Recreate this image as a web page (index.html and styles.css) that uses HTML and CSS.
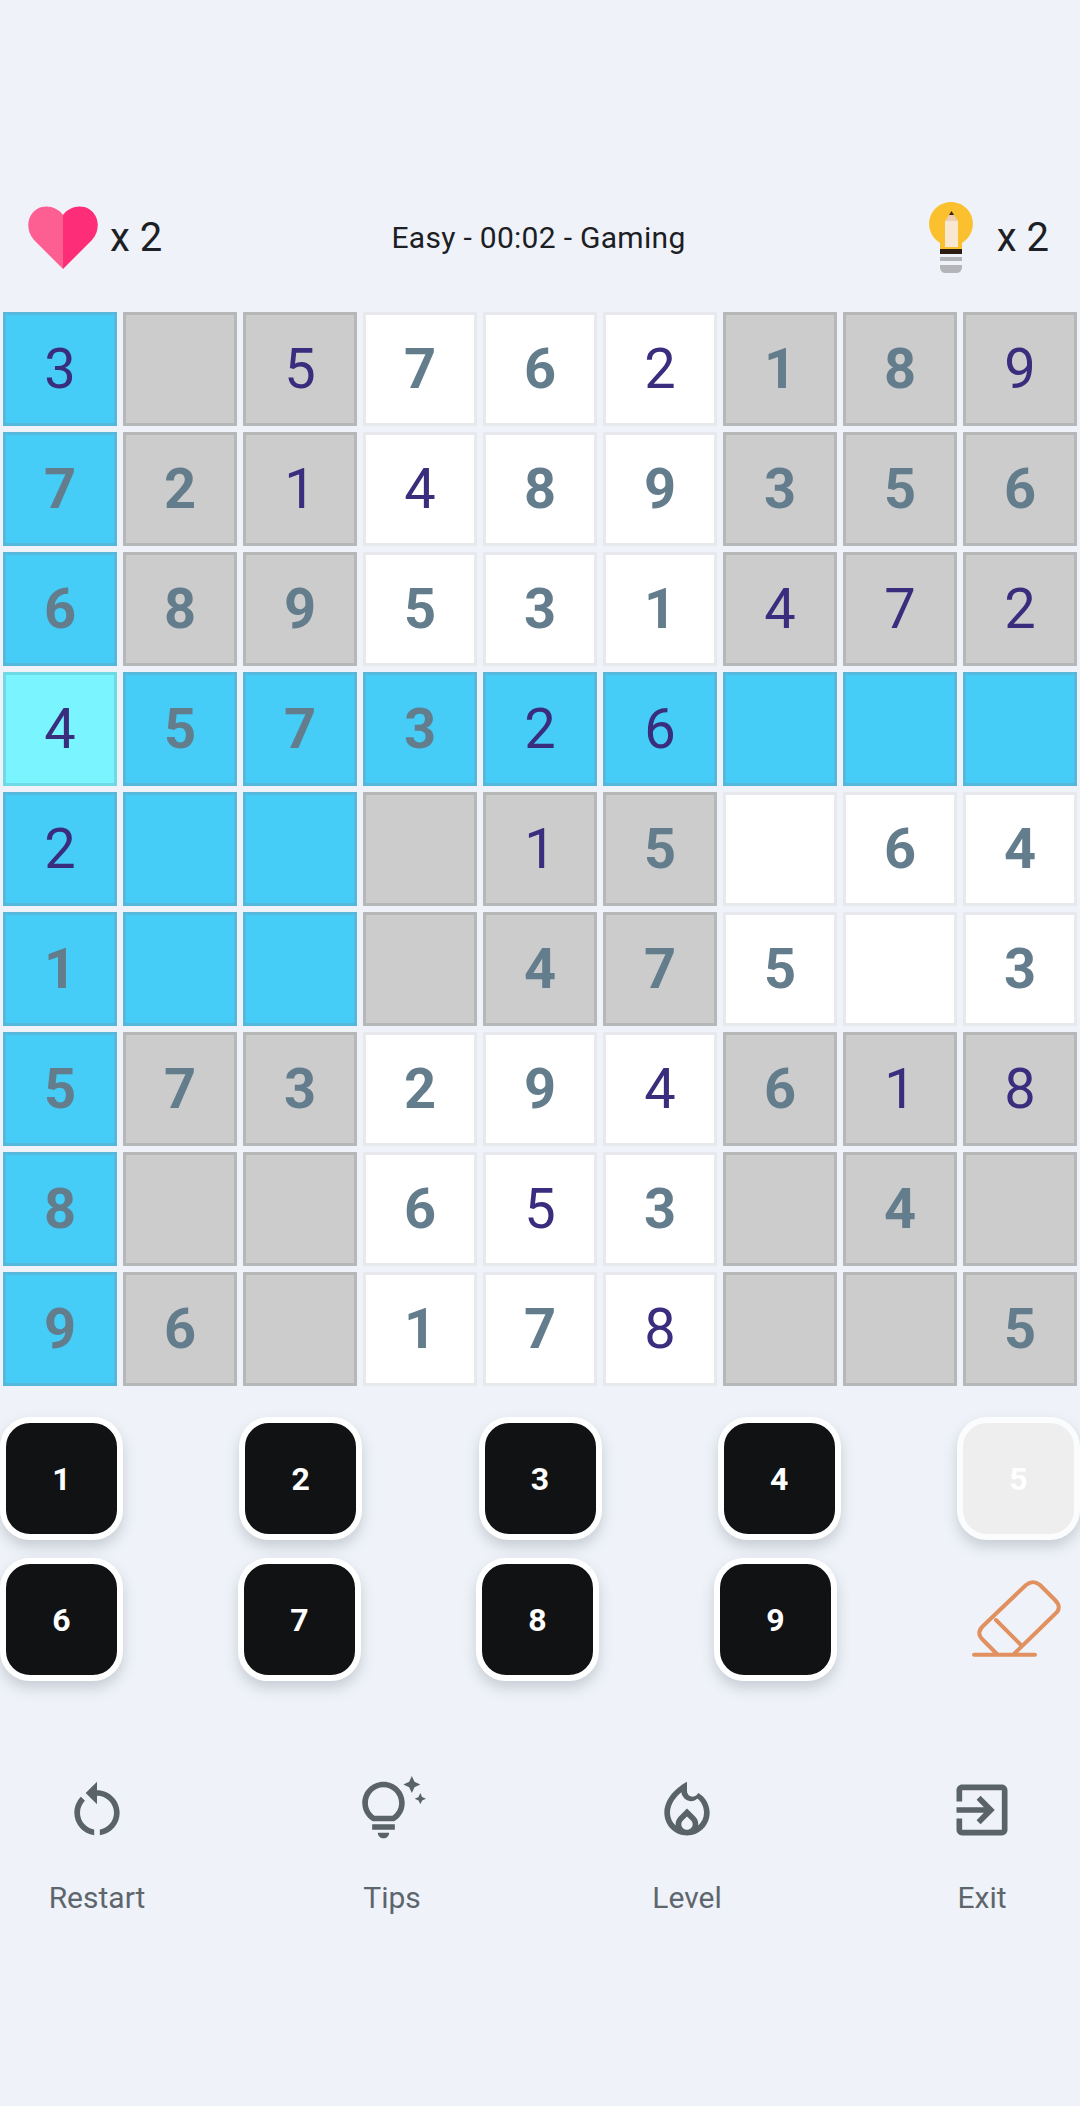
FILE: index.html
```html
<!DOCTYPE html>
<html lang="en">
<head>
  <meta charset="UTF-8">
  <meta name="viewport" content="width=device-width, initial-scale=1.0">
  <title>Sudoku</title>
  <link rel="stylesheet" href="styles.css">
</head>
<body>
  <!-- Status bar of the game -->
  <header class="status">
    <div class="lives">
      <svg class="heart" viewBox="0 0 70 63">
        <path fill="#fd5f92" d="M35 63L6 34C-3 24-1 9 9 3c9-5 20-2 26 6z"/>
        <path fill="#fe2d78" d="M35 63l29-29c9-10 7-25-3-31-9-5-20-2-26 6z"/>
      </svg>
      <span>x 2</span>
    </div>
    <div class="state">Easy - 00:02 - Gaming</div>
    <div class="hints">
      <svg class="bulb" viewBox="0 0 44 71">
        <path fill="#fbc02d" d="M22 0a22 22 0 0 1 11 41v6H11v-6A22 22 0 0 1 22 0z"/>
        <path fill="#2b1d14" d="M11 47h22v5H11z"/>
        <path fill="#b3b5b8" d="M11 55h22v4H11zM11 63h22v2c0 3-2 6-5 6H16c-3 0-5-3-5-6z"/>
        <path fill="#f8e8d2" d="M16 19h13v26H16z"/>
        <path fill="#eccfb4" d="M16 19l4-6h5l4 6z"/>
        <path fill="#3d2414" d="M22.500 13h-5l2.500-4z" transform="translate(2.500)"/>
      </svg>
      <span>x 2</span>
    </div>
  </header>

  <!-- Board -->
  <main class="board">
    <div class="cell peer mine">3</div><div class="cell box"></div><div class="cell box mine">5</div><div class="cell">7</div><div class="cell">6</div><div class="cell mine">2</div><div class="cell box">1</div><div class="cell box">8</div><div class="cell box mine">9</div>
    <div class="cell peer">7</div><div class="cell box">2</div><div class="cell box mine">1</div><div class="cell mine">4</div><div class="cell">8</div><div class="cell">9</div><div class="cell box">3</div><div class="cell box">5</div><div class="cell box">6</div>
    <div class="cell peer">6</div><div class="cell box">8</div><div class="cell box">9</div><div class="cell">5</div><div class="cell">3</div><div class="cell">1</div><div class="cell box mine">4</div><div class="cell box mine">7</div><div class="cell box mine">2</div>
    <div class="cell active mine">4</div><div class="cell peer">5</div><div class="cell peer">7</div><div class="cell peer">3</div><div class="cell peer mine">2</div><div class="cell peer mine">6</div><div class="cell peer"></div><div class="cell peer"></div><div class="cell peer"></div>
    <div class="cell peer mine">2</div><div class="cell peer"></div><div class="cell peer"></div><div class="cell box"></div><div class="cell box mine">1</div><div class="cell box">5</div><div class="cell"></div><div class="cell">6</div><div class="cell">4</div>
    <div class="cell peer">1</div><div class="cell peer"></div><div class="cell peer"></div><div class="cell box"></div><div class="cell box">4</div><div class="cell box">7</div><div class="cell">5</div><div class="cell"></div><div class="cell">3</div>
    <div class="cell peer">5</div><div class="cell box">7</div><div class="cell box">3</div><div class="cell">2</div><div class="cell">9</div><div class="cell mine">4</div><div class="cell box">6</div><div class="cell box mine">1</div><div class="cell box mine">8</div>
    <div class="cell peer">8</div><div class="cell box"></div><div class="cell box"></div><div class="cell">6</div><div class="cell mine">5</div><div class="cell">3</div><div class="cell box"></div><div class="cell box">4</div><div class="cell box"></div>
    <div class="cell peer">9</div><div class="cell box">6</div><div class="cell box"></div><div class="cell">1</div><div class="cell">7</div><div class="cell mine">8</div><div class="cell box"></div><div class="cell box"></div><div class="cell box">5</div>
  </main>

  <!-- Number keys -->
  <section class="keys">
    <div class="key-row">
      <button class="key">1</button>
      <button class="key">2</button>
      <button class="key">3</button>
      <button class="key">4</button>
      <button class="key used">5</button>
    </div>
    <div class="key-row">
      <button class="key">6</button>
      <button class="key">7</button>
      <button class="key">8</button>
      <button class="key">9</button>
      <svg class="eraser" viewBox="0 0 128 123">
        <path d="M45 96L31 82c-5-5-5-9 0-14l43-41c5-4 9-4 14 0l15 15c5 5 5 10 0 14L62 96M44 62l25 25M22 96.700h61"/>
      </svg>
    </div>
  </section>

  <!-- Actions -->
  <nav class="actions">
    <div class="action">
      <svg viewBox="0 0 24 24"><path d="M12 5V2L8 6l4 4V7c3.310 0 6 2.690 6 6 0 2.970-2.160 5.430-5 5.910v2.020c3.950-.49 7-3.850 7-7.930 0-4.420-3.580-8-8-8zm-6 8c0-1.650.67-3.150 1.760-4.240L6.340 7.340C4.900 8.790 4 10.790 4 13c0 4.080 3.050 7.440 7 7.930v-2.020c-2.840-.48-5-2.940-5-5.910z"/></svg>
      <span>Restart</span>
    </div>
    <div class="action">
      <svg viewBox="0 0 24 24"><path d="M7 20h4c0 1.100-.9 2-2 2s-2-.9-2-2zm-2-1h8v-2H5v2zm11.500-9.500c0 3.820-2.660 5.860-3.770 6.500H5.270c-1.110-.64-3.770-2.680-3.770-6.500C1.500 5.360 4.860 2 9 2s7.500 3.360 7.500 7.500zm-2 0C14.500 6.470 12.030 4 9 4S3.500 6.470 3.500 9.500c0 2.470 1.490 3.890 2.350 4.500h6.300c.86-.61 2.350-2.030 2.350-4.500zm6.870-2.130L20 8l1.370.63L22 10l.63-1.370L24 8l-1.370-.63L22 6l-.63 1.370zM19 6l.94-2.060L22 3l-2.060-.94L19 0l-.94 2.060L16 3l2.060.94L19 6z"/></svg>
      <span>Tips</span>
    </div>
    <div class="action">
      <svg viewBox="0 0 24 24"><path d="M16 6l-.44.55C14.380 8.020 12 7.190 12 5.300V2S4 6 4 13c0 4.420 3.580 8 8 8s8-3.580 8-8c0-2.960-1.610-5.620-4-7zm-4 13c-1.100 0-2-.87-2-1.940 0-.51.2-.97.58-1.340L12 14.330l1.430 1.400c.37.37.57.82.57 1.330 0 1.070-.9 1.940-2 1.940zm3.960-1.500c.04-.36.22-1.890-1.130-3.220L12 11.500l-2.830 2.780C7.810 15.620 8 17.160 8.040 17.500A5.990 5.990 0 0 1 6 13c0-3.160 2.130-5.650 4.030-7.250.23 2.750 3.770 4.190 5.610 2.200C17.080 9.050 18 10.940 18 13c0 1.770-.77 3.370-2.040 4.500z"/></svg>
      <span>Level</span>
    </div>
    <div class="action">
      <svg viewBox="0 0 24 24"><path d="M10.090 15.590L11.500 17l5-5-5-5-1.410 1.410L12.670 11H3v2h9.670l-2.580 2.590zM19 3H5c-1.110 0-2 .9-2 2v4h2V5h14v14H5v-4H3v4c0 1.100.89 2 2 2h14c1.100 0 2-.9 2-2V5c0-1.100-.9-2-2-2z"/></svg>
      <span>Exit</span>
    </div>
  </nav>
</body>
</html>
```

FILE: styles.css
```css
/* Page */
body {
  margin: 0;
  height: 2106px;
  overflow: hidden;
  background-color: #eff3f9;
  font-family: Roboto, "Liberation Sans", sans-serif;
}

/* Status bar */
.status {
  display: grid;
  grid-template-columns: 1fr auto 1fr;
  align-items: center;
  height: 72px;
  padding: 201px 31px 39px 28px;
  color: #1c2024;
}

.lives, .hints {
  display: flex;
  align-items: center;
  font-size: 40px;
}

.hints {
  justify-content: flex-end;
}

.heart {
  width: 70px;
  height: 63px;
  margin-right: 12px;
}

.bulb {
  width: 44px;
  height: 71px;
  margin-right: 24px;
}

.state {
  font-size: 30px;
  letter-spacing: 0.3px;
}

/* Board */
.board {
  display: grid;
  grid-template-columns: repeat(9, 114px);
  grid-auto-rows: 114px;
  gap: 6px;
  padding: 0 3px;
}

.cell {
  display: flex;
  align-items: center;
  justify-content: center;
  box-sizing: border-box;
  background-color: #fff;
  border: 3px solid #e7e9ec;
  color: #647d8c;
  font-size: 56px;
  font-weight: 700;
}

.cell.box {
  background-color: #cccccc;
  border-color: #b6b7b8;
}

.cell.peer {
  background-color: #45cdf7;
  border-color: #56b8dd;
}

.cell.active {
  background-color: #7af5ff;
  border-color: #6fd9e6;
}

.cell.mine {
  color: #3a2d7d;
  font-weight: 400;
}

/* Number keys */
.keys {
  display: flex;
  flex-direction: column;
  gap: 18px;
  margin-top: 31px;
}

.key-row {
  display: flex;
  justify-content: space-between;
  align-items: center;
}

.key {
  width: 123px;
  height: 123px;
  padding: 0;
  box-sizing: border-box;
  background-color: #111214;
  border: 6px solid #fff;
  border-radius: 30px;
  box-shadow: 0 7px 14px rgba(60, 70, 80, 0.22);
  color: #fff;
  font-family: inherit;
  font-size: 32px;
  font-weight: 700;
}

.key.used {
  background-color: #eeeeee;
  border-color: #fbfcfd;
}

.eraser {
  width: 128px;
  height: 123px;
}

.eraser path {
  fill: none;
  stroke: #e0915f;
  stroke-width: 4;
  stroke-linecap: round;
  stroke-linejoin: round;
}

/* Actions */
.actions {
  display: flex;
  gap: 155px;
  margin-top: 95px;
  padding-left: 27px;
}

.action {
  display: flex;
  flex-direction: column;
  align-items: center;
  width: 140px;
  color: #5e666d;
  font-size: 30px;
}

.action svg {
  width: 68px;
  height: 68px;
  margin-bottom: 36px;
  fill: #5a636a;
}
```
